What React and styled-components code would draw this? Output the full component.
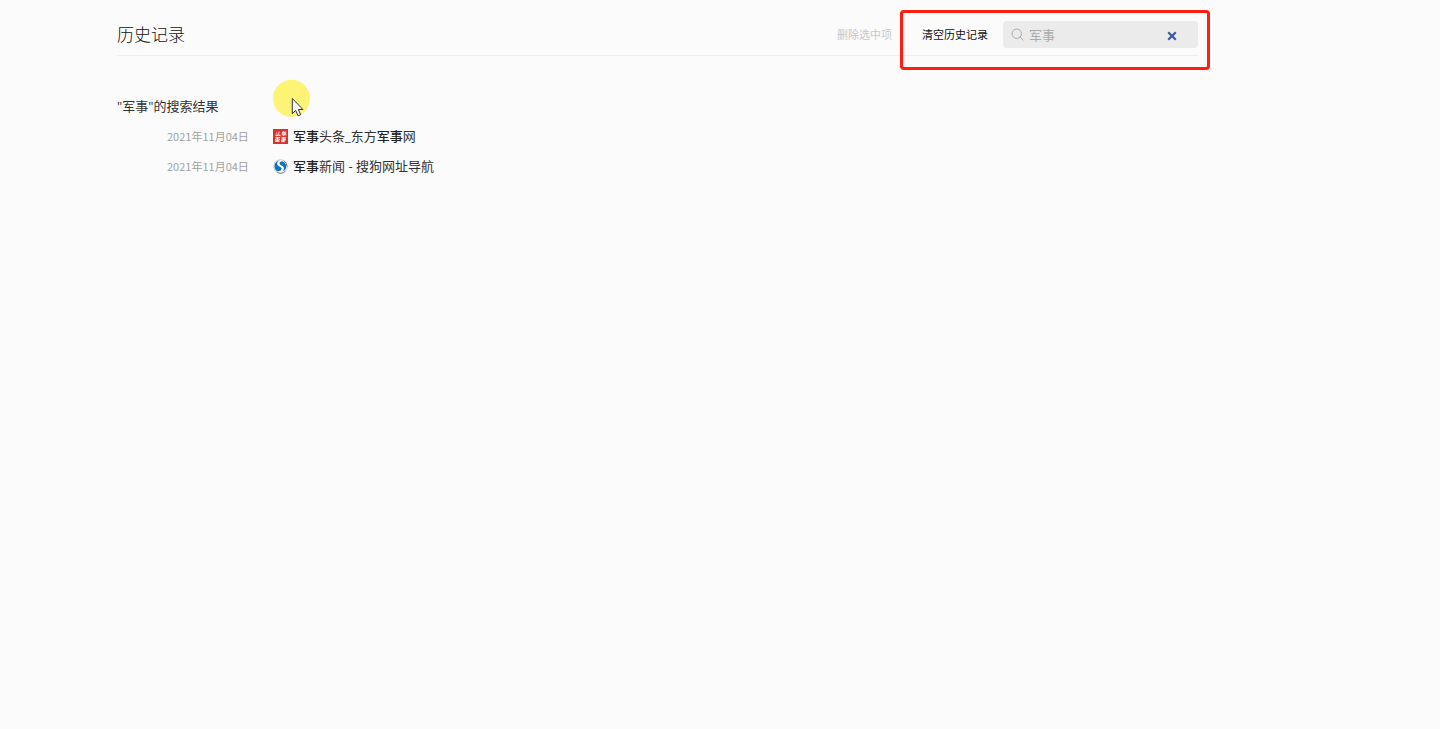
import React, { useState } from "react";
import styled, { createGlobalStyle } from "styled-components";

const GlobalStyle = createGlobalStyle`
  * {
    box-sizing: border-box;
  }
  body {
    margin: 0;
    background: #fbfbfb;
    color: #333;
    font-family: "Open Sans", "Noto Sans CJK SC", sans-serif;
    font-size: 13px;
  }
  button,
  input {
    font-family: inherit;
  }
`;

const Page = styled.main`
  padding: 14px 242px 40px 117px;
`;

const Header = styled.header`
  display: flex;
  align-items: center;
  justify-content: space-between;
  height: 42px;
  border-bottom: 1px solid #efefef;
`;

const Title = styled.h1`
  margin: 0;
  font-size: 17px;
  line-height: 24px;
  font-weight: 300;
  color: #111;
`;

const Actions = styled.div`
  display: flex;
  align-items: center;
  gap: 30px;
`;

const Highlighted = styled.div`
  position: relative;
  display: flex;
  align-items: center;
  gap: 15px;
`;

const Marker = styled.div`
  position: absolute;
  inset: -11px -12px -22px -22px;
  border: 3px solid #ff1e10;
  border-radius: 4px;
  pointer-events: none;
`;

const TextButton = styled.button`
  padding: 0;
  border: 0;
  background: none;
  font-size: 11px;
  line-height: 16px;
  white-space: nowrap;
  color: ${(props) => (props.disabled ? "#c8c8c8" : "#111")};
  cursor: ${(props) => (props.disabled ? "default" : "pointer")};
`;

const SearchBox = styled.label`
  display: flex;
  align-items: center;
  width: 195px;
  height: 27px;
  padding: 0 20px 0 8px;
  border-radius: 4px;
  background: #ebebeb;
  color: #aaa;
  svg {
    flex: none;
  }
`;

const SearchInput = styled.input`
  flex: 1;
  min-width: 0;
  padding: 0 5px;
  border: 0;
  outline: 0;
  background: none;
  font-size: 13px;
  line-height: 20px;
  color: #aaa;
`;

const ClearButton = styled.button`
  display: flex;
  padding: 2px 1px 0;
  border: 0;
  background: none;
  color: #3a5c9c;
  cursor: pointer;
`;

const Results = styled.section`
  position: relative;
  padding-top: 40px;
`;

const ResultsTitle = styled.h2`
  margin: 0;
  font-size: 13px;
  line-height: 20px;
  font-weight: 400;
`;

const List = styled.ul`
  margin: 5px 0 0;
  padding: 0 0 0 50px;
  list-style: none;
`;

const Item = styled.li`
  display: flex;
  align-items: center;
  height: 30px;
`;

const DateText = styled.time`
  width: 106px;
  font-family: "Noto Sans CJK SC", sans-serif;
  font-size: 11px;
  line-height: 16px;
  color: #a2a2a2;
`;

const ItemLink = styled.a`
  display: flex;
  align-items: center;
  gap: 5px;
  line-height: 20px;
  color: #333;
  text-decoration: none;
  b {
    font-weight: 500;
    color: #222;
  }
`;

const Pointer = styled.div`
  position: absolute;
  top: 23px;
  left: 156px;
  width: 37px;
  height: 38px;
  pointer-events: none;
  svg {
    display: block;
  }
`;

const SearchIcon = () => (
  <svg width="13" height="13" viewBox="0 0 13 13" fill="none" stroke="#aaa">
    <circle cx="5.7" cy="5.7" r="4.7" />
    <path d="M9.1 9.1L12.4 12.4" />
  </svg>
);

const ClearIcon = () => (
  <svg width="10" height="10" viewBox="0 0 10 10" stroke="currentColor">
    <path d="M1.2 1.2L8.8 8.8M8.8 1.2L1.2 8.8" strokeWidth="2.3" />
  </svg>
);

const EastdayIcon = () => (
  <svg width="15" height="15" viewBox="0 0 15 15">
    <rect width="15" height="15" fill="#dc3028" />
    <g
      fill="none"
      stroke="#fff"
      strokeWidth="0.9"
      strokeOpacity="0.9"
      transform="translate(1.4 0) skewX(-8)"
    >
      <path d="M2.4 3l1 .7M2.2 4.5l1 .6M1.8 6.3h5M5 2.5v2.4L2.8 7M5.2 5.6L7 7" />
      <path d="M8.3 3.1h4M9.4 2.4L8 4.3M11.6 3.2L8.2 5M9 3.6l3.6 1.3M8 5.8h4.8M10.3 4.8v2.4" />
      <path d="M2.2 8.6h4.6M2.7 9.9h3.7v1.4H2.7zM2.2 12.3h4.8M4.5 8.4v4.6" />
      <path d="M8.2 8.7h4.8M8.8 9.8h3.6v1H8.8zM8.4 11.7h4.3M8.4 12.7h3.8M10.6 8.2v4.6" />
    </g>
  </svg>
);

const SogouIcon = () => (
  <svg width="15" height="15" viewBox="0 0 15 15">
    <circle cx="7.5" cy="7.5" r="6.8" fill="#fff" stroke="#c8cbd0" />
    <path
      d="M12.3 12.1A6.6 6.6 0 0 1 4.3 13.2M11 1.9A6.6 6.6 0 0 1 14 7.4"
      fill="none"
      stroke="#777e88"
    />
    <path
      d="M6.6 1.6C3.4 2 1.4 4.5 1.5 7.4c.1 2.2 1.2 3.9 2.8 4.9 2.1.3 4-.6 4.2-2.2.1-1.2-.8-1.9-2.1-2.6C4.8 6.6 3.9 5.7 4.2 4.2 4.4 3 5.3 2.1 6.6 1.6z"
      fill="#1474b8"
    />
    <path
      d="M9.2 2.3C7.6 2.4 6.5 3.3 6.6 4.4c.1 1 1 1.5 2.1 2.1 1.7.9 2.5 1.9 2.2 3.5-.2 1-.8 1.9-1.7 2.6 2.5-.7 4.1-2.7 4.1-5.1 0-2.5-1.6-4.6-4.1-5.2z"
      fill="#1474b8"
    />
  </svg>
);

const PointerIcon = () => (
  <svg width="37" height="38" viewBox="0 0 37 38">
    <circle cx="18.5" cy="19.3" r="18.5" fill="#fdf476" />
    <path
      d="M19.3 19.5v15.2l3.4-3.2 2.4 5.3 2.6-1.1-2.4-5.2h4.6z"
      fill="#fff"
      stroke="#333"
      strokeLinejoin="round"
    />
  </svg>
);

const results = [
  {
    id: 1,
    date: "2021年11月04日",
    dateTime: "2021-11-04",
    title: "军事头条_东方军事网",
    icon: <EastdayIcon />,
  },
  {
    id: 2,
    date: "2021年11月04日",
    dateTime: "2021-11-04",
    title: "军事新闻 - 搜狗网址导航",
    icon: <SogouIcon />,
  },
];

const keyword = "军事";

const Marked = ({ text }) =>
  text.split(keyword).map((part, index) => (
    <React.Fragment key={index}>
      {index > 0 && <b>{keyword}</b>}
      {part}
    </React.Fragment>
  ));

const App = () => {
  const [query, setQuery] = useState(keyword);
  return (
    <>
      <GlobalStyle />
      <Page>
        <Header>
          <Title>历史记录</Title>
          <Actions>
            <TextButton type="button" disabled>
              删除选中项
            </TextButton>
            <Highlighted>
              <TextButton type="button">清空历史记录</TextButton>
              <SearchBox htmlFor="history-search">
                <SearchIcon />
                <SearchInput
                  id="history-search"
                  type="text"
                  aria-label="搜索历史记录"
                  value={query}
                  onChange={(e) => setQuery(e.target.value)}
                />
                <ClearButton
                  type="button"
                  aria-label="清除"
                  onClick={() => setQuery("")}
                >
                  <ClearIcon />
                </ClearButton>
              </SearchBox>
              <Marker />
            </Highlighted>
          </Actions>
        </Header>
        <Results>
          <ResultsTitle>"{keyword}"的搜索结果</ResultsTitle>
          <List>
            {results.map((item) => (
              <Item key={item.id}>
                <DateText dateTime={item.dateTime}>{item.date}</DateText>
                <ItemLink href="#">
                  {item.icon}
                  <span>
                    <Marked text={item.title} />
                  </span>
                </ItemLink>
              </Item>
            ))}
          </List>
          <Pointer>
            <PointerIcon />
          </Pointer>
        </Results>
      </Page>
    </>
  );
};

export default App;
